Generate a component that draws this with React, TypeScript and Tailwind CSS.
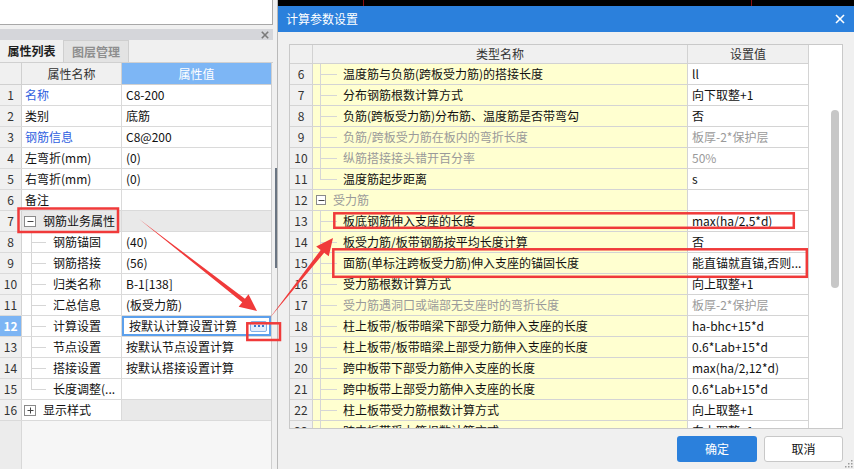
import React from "react";

type Kind = "plain" | "child" | "last" | "group";

type LeftRow = {
  n: number;
  name: string;
  value?: string;
  blue?: boolean;
  kind?: Kind;
  sign?: "-" | "+";
  selected?: boolean;
};

type DlgRow = {
  n: number;
  name: string;
  value?: string;
  kind?: Kind;
  gray?: boolean;
};

const leftRows: LeftRow[] = [
  { n: 1, name: "名称", value: "C8-200", blue: true },
  { n: 2, name: "类别", value: "底筋" },
  { n: 3, name: "钢筋信息", value: "C8@200", blue: true },
  { n: 4, name: "左弯折(mm)", value: "(0)" },
  { n: 5, name: "右弯折(mm)", value: "(0)" },
  { n: 6, name: "备注", value: "" },
  { n: 7, name: "钢筋业务属性", kind: "group", sign: "-" },
  { n: 8, name: "钢筋锚固", value: "(40)", kind: "child" },
  { n: 9, name: "钢筋搭接", value: "(56)", kind: "child" },
  { n: 10, name: "归类名称", value: "B-1[138]", kind: "child" },
  { n: 11, name: "汇总信息", value: "(板受力筋)", kind: "child" },
  { n: 12, name: "计算设置", value: "按默认计算设置计算", kind: "child", selected: true },
  { n: 13, name: "节点设置", value: "按默认节点设置计算", kind: "child" },
  { n: 14, name: "搭接设置", value: "按默认搭接设置计算", kind: "child" },
  { n: 15, name: "长度调整(...", value: "", kind: "last" },
  { n: 16, name: "显示样式", kind: "group", sign: "+" },
];

const dlgRows: DlgRow[] = [
  { n: 6, name: "温度筋与负筋(跨板受力筋)的搭接长度", value: "ll", kind: "child" },
  { n: 7, name: "分布钢筋根数计算方式", value: "向下取整+1", kind: "child" },
  { n: 8, name: "负筋(跨板受力筋)分布筋、温度筋是否带弯勾", value: "否", kind: "child" },
  { n: 9, name: "负筋/跨板受力筋在板内的弯折长度", value: "板厚-2*保护层", kind: "child", gray: true },
  { n: 10, name: "纵筋搭接接头错开百分率", value: "50%", kind: "child", gray: true },
  { n: 11, name: "温度筋起步距离", value: "s", kind: "last" },
  { n: 12, name: "受力筋", kind: "group", gray: true },
  { n: 13, name: "板底钢筋伸入支座的长度", value: "max(ha/2,5*d)", kind: "child" },
  { n: 14, name: "板受力筋/板带钢筋按平均长度计算", value: "否", kind: "child" },
  { n: 15, name: "面筋(单标注跨板受力筋)伸入支座的锚固长度", value: "能直锚就直锚,否则...", kind: "child" },
  { n: 16, name: "受力筋根数计算方式", value: "向上取整+1", kind: "child" },
  { n: 17, name: "受力筋遇洞口或端部无支座时的弯折长度", value: "板厚-2*保护层", kind: "child", gray: true },
  { n: 18, name: "柱上板带/板带暗梁下部受力筋伸入支座的长度", value: "ha-bhc+15*d", kind: "child" },
  { n: 19, name: "柱上板带/板带暗梁上部受力筋伸入支座的长度", value: "0.6*Lab+15*d", kind: "child" },
  { n: 20, name: "跨中板带下部受力筋伸入支座的长度", value: "max(ha/2,12*d)", kind: "child" },
  { n: 21, name: "跨中板带上部受力筋伸入支座的长度", value: "0.6*Lab+15*d", kind: "child" },
  { n: 22, name: "柱上板带受力筋根数计算方式", value: "向上取整+1", kind: "child" },
  { n: 23, name: "跨中板带受力筋根数计算方式", value: "向上取整+1", kind: "child" },
];

function ToggleBox({ sign, className }: { sign: "-" | "+"; className: string }) {
  return (
    <div className={`shrink-0 border border-[#8a8a8a] bg-white flex items-center justify-center ${className}`}>
      <svg width="7" height="7" viewBox="0 0 7 7">
        <line x1="0.5" y1="3.5" x2="6.5" y2="3.5" stroke="#444" strokeWidth="1" />
        {sign === "+" && <line x1="3.5" y1="0.5" x2="3.5" y2="6.5" stroke="#444" strokeWidth="1" />}
      </svg>
    </div>
  );
}

function Branch({ last, className }: { last: boolean; className: string }) {
  return (
    <div className={`self-stretch flex flex-col shrink-0 ${className}`}>
      <div className="flex-1 border-l border-b border-[#d6d6d6]" />
      <div className={`flex-1 ${last ? "" : "border-l border-[#d6d6d6]"}`} />
    </div>
  );
}

function CloseX({ color, size, width }: { color: string; size: number; width: number }) {
  return (
    <svg width={size} height={size} viewBox="0 0 10 10">
      <line x1="1" y1="1" x2="9" y2="9" stroke={color} strokeWidth={width} />
      <line x1="9" y1="1" x2="1" y2="9" stroke={color} strokeWidth={width} />
    </svg>
  );
}

function LeftPanel() {
  return (
    <div className="w-[273px] shrink-0 flex flex-col">
      <div className="h-[25px] bg-white border-r border-b border-[#a8a8a8]" />
      <div className="h-[4px]" />
      <div className="h-[11px] bg-[#d5d6da] flex items-center justify-end pr-[4px]">
        <CloseX color="#7a7a7a" size={8} width={2} />
      </div>
      <div className="h-[23px] flex items-stretch border-b border-[#d0d0d0]">
        <div className="w-[63px] flex items-center justify-center text-[#1e1e1e] font-bold">属性列表</div>
        <div className="w-[66px] flex items-center justify-center bg-[#e3e3e3] border-l border-r border-t border-[#cfcfcf] text-[#8e8e8e] font-bold">
          图层管理
        </div>
      </div>
      <div className="w-[272px] flex-1 flex flex-col border-r border-[#cfcfcf]">
        <div className="h-[22px] flex border-b border-[#d0d0d0]">
          <div className="w-[22px] shrink-0 bg-[#f0f0f0] border-r border-[#d0d0d0]" />
          <div className="w-[100px] shrink-0 bg-[#f0f0f0] border-r border-[#d0d0d0] flex items-center justify-center text-[#333]">
            属性名称
          </div>
          <div className="flex-1 bg-[#7db6f5] flex items-center justify-center text-white">属性值</div>
        </div>
        {leftRows.map((r) => {
          const group = r.kind === "group";
          const nameBg = group && r.sign === "-" ? "bg-[#e9e9e9]" : "bg-white";
          return (
            <div key={r.n} className="h-[21px] flex border-b border-[#dadada]">
              <div
                className={`w-[22px] shrink-0 border-r border-[#d2d2d2] flex items-center justify-center ${
                  r.selected ? "bg-[#7db5f4] text-white font-bold" : "bg-[#f0f0f0] text-[#333]"
                }`}
              >
                {r.n}
              </div>
              <div
                className={`w-[100px] shrink-0 border-r border-[#dadada] flex items-center overflow-hidden whitespace-nowrap ${nameBg}`}
              >
                {group && (
                  <>
                    <ToggleBox sign={r.sign ?? "-"} className="ml-[2px] w-[12px] h-[11px]" />
                    <span className="ml-[7px]">{r.name}</span>
                  </>
                )}
                {(r.kind === "child" || r.kind === "last") && (
                  <>
                    <Branch last={r.kind === "last"} className="ml-[9px] w-[15px]" />
                    <span className="ml-[7px]">{r.name}</span>
                  </>
                )}
                {!r.kind && <span className={`pl-[3px] ${r.blue ? "text-[#2f5fe0]" : ""}`}>{r.name}</span>}
              </div>
              {r.selected ? (
                <div className="flex-1 border-2 border-[#5ca0ec] bg-white flex items-center justify-between pl-[5px] pr-[2px]">
                  <span>{r.value}</span>
                  <div className="w-[17px] h-[11px] rounded-[2px] border border-[#86b2e6] bg-[#e4eefc] flex items-center justify-center gap-[2px]">
                    <span className="w-[2px] h-[2px] bg-[#3a78cc]" />
                    <span className="w-[2px] h-[2px] bg-[#3a78cc]" />
                    <span className="w-[2px] h-[2px] bg-[#3a78cc]" />
                  </div>
                </div>
              ) : (
                <div
                  className={`flex-1 flex items-center pl-[4px] whitespace-nowrap overflow-hidden ${
                    group ? "bg-[#e9e9e9]" : "bg-white"
                  }`}
                >
                  {r.value}
                </div>
              )}
            </div>
          );
        })}
        <div className="flex-1 flex">
          <div className="w-[22px] bg-[#ececec] border-r border-[#d8d8d8]" />
          <div className="flex-1 bg-[#f6f6f6]" />
        </div>
      </div>
    </div>
  );
}

function Splitter() {
  return (
    <div className="w-[4px] shrink-0 flex pt-[168px] pl-[2px]">
      <div className="w-[2px] h-[100px] bg-[#6a7582]" />
    </div>
  );
}

function DialogTable() {
  return (
    <div className="h-[385px] border border-[#c9c9c9] bg-white flex overflow-hidden">
      <div className="w-[519px] shrink-0 flex flex-col">
        <div className="h-[19px] shrink-0 flex border-b border-[#d2d2d2] bg-[#f0f0f0] text-[#333]">
          <div className="w-[23px] shrink-0 border-r border-[#d2d2d2]" />
          <div className="w-[375px] shrink-0 border-r border-[#d2d2d2] flex items-center justify-center">类型名称</div>
          <div className="w-[121px] shrink-0 border-r border-[#d2d2d2] flex items-center justify-center">设置值</div>
        </div>
        {dlgRows.map((r) => (
          <div key={r.n} className="h-[21px] shrink-0 flex border-b border-[#d4d4d4]">
            <div className="w-[23px] shrink-0 bg-[#f0f0f0] border-r border-[#d2d2d2] flex items-center justify-center text-[#333]">
              {r.n}
            </div>
            <div
              className={`w-[375px] shrink-0 bg-[#ffffd0] border-r border-[#d4d4d4] flex items-center overflow-hidden whitespace-nowrap ${
                r.gray ? "text-[#9a9a9a]" : "text-[#111]"
              }`}
            >
              {r.kind === "group" ? (
                <>
                  <ToggleBox sign="-" className="ml-[3px] w-[10px] h-[10px]" />
                  <span className="ml-[7px]">{r.name}</span>
                </>
              ) : (
                <>
                  <Branch last={r.kind === "last"} className="ml-[7px] w-[17px]" />
                  <span className="ml-[6px]">{r.name}</span>
                </>
              )}
            </div>
            <div
              className={`w-[121px] shrink-0 bg-white border-r border-[#d4d4d4] flex items-center pl-[4px] overflow-hidden whitespace-nowrap ${
                r.gray ? "text-[#9a9a9a]" : "text-[#111]"
              }`}
            >
              {r.value}
            </div>
          </div>
        ))}
      </div>
      <div className="flex-1 flex justify-end pr-[3px] pt-[65px]">
        <div className="w-[8px] h-[178px] rounded-full bg-[#c7c7c7]" />
      </div>
    </div>
  );
}

function Dialog() {
  return (
    <div className="flex-1 flex flex-col border-l border-[#b9b9b9]">
      <div className="h-[6px] shrink-0 bg-black flex">
        <div className="w-[85px]" />
        <div className="w-[1px] bg-[#8a1010]" />
        <div className="w-[387px]" />
        <div className="w-[1px] bg-[#8a1010]" />
      </div>
      <div className="h-[26px] shrink-0 bg-[#2b80dc] flex items-center justify-between pl-[8px] pr-[9px] text-white">
        <span>计算参数设置</span>
        <CloseX color="#ffffff" size={10} width={1.6} />
      </div>
      <div className="flex-1 bg-[#f0f0f0] pl-[11px] pr-[11px] pt-[12px] flex flex-col">
        <DialogTable />
        <div className="mt-[7px] flex justify-end gap-[7px]">
          <button className="w-[80px] h-[26px] rounded-[3px] bg-[#2b80dc] text-white">确定</button>
          <button className="w-[79px] h-[26px] rounded-[3px] bg-white border border-[#c8c8c8] text-[#111]">取消</button>
        </div>
      </div>
    </div>
  );
}

function arrowPoints(x1: number, y1: number, x2: number, y2: number) {
  const a = Math.atan2(y2 - y1, x2 - x1);
  const c = Math.cos(a);
  const s = Math.sin(a);
  const len = 17;
  const hw = 8;
  const bw = 2.2;
  const bx = x2 - len * c;
  const by = y2 - len * s;
  const pts = [
    [x1, y1],
    [bx + bw * s, by - bw * c],
    [bx + hw * s, by - hw * c],
    [x2, y2],
    [bx - hw * s, by + hw * c],
    [bx - bw * s, by + bw * c],
  ];
  return pts.map((p) => p.join(",")).join(" ");
}

function Annotations() {
  const red = "#f03a3a";
  return (
    <svg className="absolute inset-0 pointer-events-none" width="854" height="469" viewBox="0 0 854 469">
      <rect x="18.5" y="208.5" width="99.5" height="23.5" fill="none" stroke={red} strokeWidth="2.5" />
      <rect x="247.3" y="323.3" width="32.7" height="16.7" fill="none" stroke={red} strokeWidth="2.5" />
      <rect x="334.3" y="213.3" width="459.5" height="14.5" fill="none" stroke={red} strokeWidth="2.5" />
      <rect x="333.3" y="249.3" width="473.5" height="27.5" fill="none" stroke={red} strokeWidth="2.5" />
      <polygon points={arrowPoints(139, 219, 257, 311)} fill={red} />
      <polygon points={arrowPoints(269, 319, 333, 238)} fill={red} />
      <g fill="#9a9a9a">
        <rect x="851" y="460" width="1.5" height="1.5" />
        <rect x="848" y="463" width="1.5" height="1.5" />
        <rect x="851" y="463" width="1.5" height="1.5" />
        <rect x="845" y="466" width="1.5" height="1.5" />
        <rect x="848" y="466" width="1.5" height="1.5" />
        <rect x="851" y="466" width="1.5" height="1.5" />
      </g>
    </svg>
  );
}

export default function App() {
  return (
    <div className="relative w-[854px] h-[469px] overflow-hidden flex bg-[#f0f0f0] text-[12px] leading-[16px] text-[#111] font-['Noto_Sans_CJK_SC','Noto_Sans',sans-serif]">
      <LeftPanel />
      <Splitter />
      <Dialog />
      <Annotations />
    </div>
  );
}
